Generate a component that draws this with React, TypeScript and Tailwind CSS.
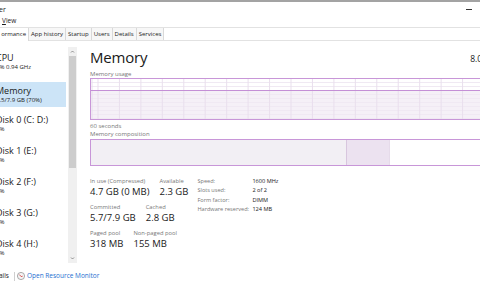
import React from 'react'

type SideItem = { title: string; sub: string; active?: boolean }

const sideItems: SideItem[] = [
  { title: 'CPU', sub: '3% 0.94 GHz' },
  { title: 'Memory', sub: '5.5/7.9 GB (70%)', active: true },
  { title: 'Disk 0 (C: D:)', sub: '0%' },
  { title: 'Disk 1 (E:)', sub: '0%' },
  { title: 'Disk 2 (F:)', sub: '0%' },
  { title: 'Disk 3 (G:)', sub: '0%' },
  { title: 'Disk 4 (H:)', sub: '0%' },
]

const tabs = ['App history', 'Startup', 'Users', 'Details', 'Services']

const UsageGraph: React.FC = () => {
  const w = 405
  const h = 40
  const cols = Array.from({ length: 19 }, (_, i) => 7 + i * 21.5)
  const rows = Array.from({ length: 10 }, (_, i) => 3 + i * 4)
  return (
    <svg width="100%" height="100%" viewBox={`0 0 ${w} ${h}`} preserveAspectRatio="none" className="block">
      <rect x="0" y="11" width={w} height={h - 11} fill="#f5f0f7" />
      {rows.map((y) => (
        <line key={y} x1="0" x2={w} y1={y + 0.5} y2={y + 0.5} stroke="#f0e9f3" strokeWidth="1" />
      ))}
      {cols.map((x) => (
        <line key={x} x1={x} x2={x} y1="0" y2={h} stroke="#e9dfed" strokeWidth="1" />
      ))}
      <line x1="1" x2="1" y1="0" y2={h} stroke="#e9dfed" strokeWidth="1" />
      <line x1="0" x2={w} y1="11.5" y2="11.5" stroke="#c48fd6" strokeWidth="1" />
    </svg>
  )
}

const Stat: React.FC<{ label: string; value: string }> = ({ label, value }) => (
  <div className="flex flex-col">
    <span className="text-[5.8px] leading-[8px] text-[#777] whitespace-nowrap">{label}</span>
    <span className="text-[9.5px] leading-[13px] text-[#1a1a1a] whitespace-nowrap">{value}</span>
  </div>
)

const App: React.FC = () => {
  return (
    <div className="w-[480px] h-[288px] overflow-hidden bg-white font-['Open_Sans','Noto_Sans',sans-serif] text-[#1a1a1a] flex flex-col">
      <div className="h-[2px] bg-[#a3a3a3] shrink-0" />
      <div className="h-[14px] flex items-center justify-between shrink-0">
        <span className="text-[7px] leading-none ml-[-1px]">er</span>
        <span className="w-[6px] h-[1px] bg-[#333] mr-[8px]" />
      </div>
      <div className="h-[11px] flex items-center shrink-0">
        <span className="text-[6.5px] leading-none ml-[2px]">
          <span className="underline">V</span>iew
        </span>
      </div>
      <div className="h-[14px] flex border-y border-[#e2e2e2] shrink-0 text-[6px]">
        <div className="w-[29px] bg-white border-r border-[#d9d9d9] flex items-center justify-end pr-[2px] -mb-px">ormance</div>
        {tabs.map((t) => (
          <div key={t} className="px-[2px] bg-[#f7f7f7] border-r border-[#d9d9d9] flex items-center">{t}</div>
        ))}
      </div>

      <div className="flex flex-1 min-h-0">
        <div className="w-[78px] shrink-0 flex pt-[6px]">
          <div className="w-[66px] flex flex-col gap-[6px] pt-[2px]">
            {sideItems.map((it) => (
              <div key={it.title} className={`h-[25px] flex flex-col justify-center ${it.active ? 'bg-[#cce4f7] mt-[2px] -mb-[2px]' : ''}`}>
                <span className="text-[9px] leading-[11px] ml-[-4px] whitespace-nowrap">{it.title}</span>
                <span className="text-[6px] leading-[8px] ml-[-4px] whitespace-nowrap">{it.sub}</span>
              </div>
            ))}
          </div>
          <div className="ml-[2px] w-[9px] h-[216px] bg-[#f0f0f0] flex flex-col items-center">
            <svg width="5" height="9" viewBox="0 0 5 9" className="block">
              <path d="M1 5.5 L2.5 4 L4 5.5" fill="none" stroke="#777" strokeWidth="0.8" />
            </svg>
            <div className="w-[7px] h-[112px] bg-[#cdcdcd]" />
            <svg width="5" height="9" viewBox="0 0 5 9" className="block mt-auto">
              <path d="M1 3.5 L2.5 5 L4 3.5" fill="none" stroke="#777" strokeWidth="0.8" />
            </svg>
          </div>
        </div>

        <div className="ml-[12px] w-[406px] shrink-0 flex flex-col pt-[6px]">
          <div className="flex items-end justify-between">
            <span className="text-[15px] leading-[20px] tracking-[-0.2px]">Memory</span>
            <span className="text-[8.5px] leading-[14px] mb-[1px]">8.0 GB</span>
          </div>
          <span className="text-[6px] leading-[8px] text-[#777] mt-[3px]">Memory usage</span>
          <div className="h-[42px] border border-[#c896d8]">
            <UsageGraph />
          </div>
          <span className="text-[6px] leading-[8px] text-[#777] mt-[2px]">60 seconds</span>
          <span className="text-[6px] leading-[8px] text-[#777]">Memory composition</span>
          <div className="h-[27px] border border-[#c896d8] mt-[1px] flex">
            <div className="w-[256px] bg-[#f2eff4] border-r border-[#d8c6de]" />
            <div className="w-[43px] bg-[#ece2f0] border-r border-[#e6dbea]" />
          </div>

          <div className="flex items-start gap-[9px] mt-[11px]">
            <div className="flex flex-col gap-[5px]">
              <div className="flex gap-[10px]">
                <Stat label="In use (Compressed)" value="4.7 GB (0 MB)" />
                <Stat label="Available" value="2.3 GB" />
              </div>
              <div className="flex gap-[10px]">
                <Stat label="Committed" value="5.7/7.9 GB" />
                <Stat label="Cached" value="2.8 GB" />
              </div>
              <div className="flex gap-[10px]">
                <Stat label="Paged pool" value="318 MB" />
                <Stat label="Non-paged pool" value="155 MB" />
              </div>
            </div>
            <div className="grid grid-cols-[55px_auto] content-start text-[5.6px] leading-[9.3px] whitespace-nowrap">
              <span className="text-[#777]">Speed:</span>
              <span>1600 MHz</span>
              <span className="text-[#777]">Slots used:</span>
              <span>2 of 2</span>
              <span className="text-[#777]">Form factor:</span>
              <span>DIMM</span>
              <span className="text-[#777]">Hardware reserved:</span>
              <span>124 MB</span>
            </div>
          </div>
        </div>
      </div>

      <div className="h-[20px] shrink-0 flex items-center text-[6.5px] pb-[4px]">
        <span className="ml-[-31px] whitespace-nowrap">Fewer details</span>
        <span className="w-px h-[9px] bg-[#cfcfcf] ml-[5px]" />
        <svg width="8" height="8" viewBox="0 0 8 8" className="ml-[2px]">
          <circle cx="4" cy="4" r="3.6" fill="#f4f4f4" stroke="#8a8a8a" strokeWidth="0.7" />
          <path d="M2.3 2.6 L4.2 4.6 L5.6 4.2" fill="none" stroke="#d23a3a" strokeWidth="0.9" />
        </svg>
        <span className="ml-[2px] text-[#1e6fd0] whitespace-nowrap">Open Resource Monitor</span>
      </div>
    </div>
  )
}

export default App
